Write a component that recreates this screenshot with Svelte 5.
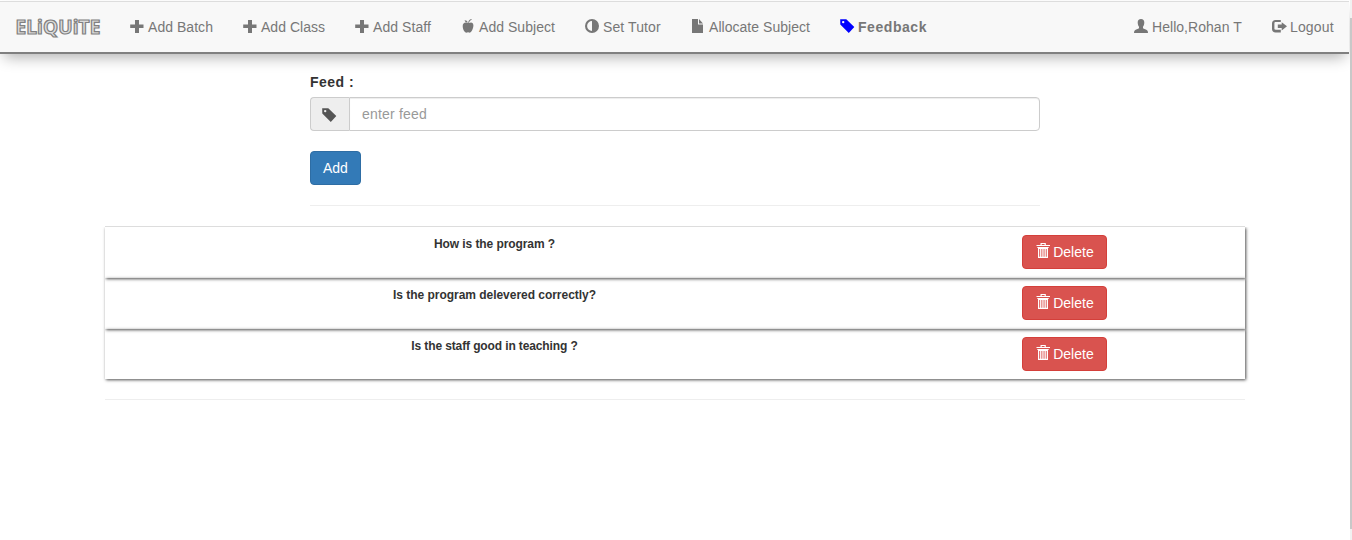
<script>
  const nav = [
    { icon: 'plus', label: 'Add Batch', width: 65, tracking: 0.04 },
    { icon: 'plus', label: 'Add Class', width: 64, tracking: 0.02 },
    { icon: 'plus', label: 'Add Staff', width: 58, tracking: 0.08 },
    { icon: 'apple', label: 'Add Subject', width: 76, tracking: 0.04 },
    { icon: 'adjust', label: 'Set Tutor', width: 58, tracking: 0.1 },
    { icon: 'file', label: 'Allocate Subject', width: 101, tracking: 0.04 },
    { icon: 'tag', label: 'Feedback', width: 69, tracking: 0.55, active: true }
  ];
  const account = [
    { icon: 'user', label: 'Hello,Rohan T', width: 90, tracking: 0.04 },
    { icon: 'logout', label: 'Logout', width: 44, tracking: 0.14 }
  ];
  const feeds = [
    { text: 'How is the program ?', tracking: -0.08 },
    { text: 'Is the program delevered correctly?', tracking: -0.03 },
    { text: 'Is the staff good in teaching ?', tracking: -0.12 }
  ];
</script>

{#snippet glyph(name)}
  <svg class="glyph {name}" viewBox="0 0 14 14" fill="currentColor" aria-hidden="true">
    {#if name === 'plus'}
      <path d="M5 1h4v4.500h4.500v3.500H9V14H5V9H.2V5.500H5z" />
    {:else if name === 'apple'}
      <path d="M7.300 4C7.200 2.500 7.900 1 10.200.1l.6.7C9.200 1.500 8.200 2.500 8 4c2.200-1.300 4.400-.5 4.400 2.300 0 3.300-2 7.400-3.900 7.400-.7 0-.8-.4-1.400-.4s-.7.400-1.400.4C3.700 13.700 1.700 10.500 1.700 7c0-3.200 2.400-4.300 5.600-3zM6.700 3.500C5 3.500 3.900 2.800 3.600 1.300 5.200 1.200 6.400 1.900 6.700 3.500z" />
    {:else if name === 'adjust'}
      <path fill-rule="evenodd" d="M7 0a7 7 0 1 0 0 14A7 7 0 0 0 7 0zm0 2.100v9.800a4.900 4.900 0 0 1 0-9.800z" />
    {:else if name === 'file'}
      <path d="M1 0H7v5.500h5V14H1zM8 0l4 4.400H8z" />
    {:else if name === 'tag'}
      <path fill-rule="evenodd" d="M.2.200 6.300.2 14.300 8 8.800 13.900.3 5.600zM3.200 1.900a1.200 1.200 0 1 0 0 2.400 1.200 1.200 0 0 0 0-2.400z" />
    {:else if name === 'user'}
      <path d="M7 0c2.200 0 3.300 1.400 3.300 3.500 0 1.900-.6 3.300-1.300 4.300v1.500c1 .8 3.200 1.200 4.300 2.200.5.500.7 1.300.7 2.500H0c0-1.200.2-2 .7-2.500 1.100-1 3.300-1.400 4.300-2.200V7.800c-.7-1-1.300-2.400-1.300-4.300C3.700 1.400 4.800 0 7 0z" />
    {:else if name === 'logout'}
      <path d="M8.800 1v2.100H3.600c-.8 0-1.200.5-1.200 1.200v5.300c0 .8.4 1.200 1.200 1.200h5.200V13.500H3.500C1.400 13.500 0 12 0 9.900v-5.400C0 2.400 1.400 1 3.500 1zM9.700 3.200l5.300 4.100-5.300 4.100V9H5.800V5.600h3.900z" />
    {:else if name === 'trash'}
      <path fill-rule="evenodd" d="M4.500-1h5.300v2H14v1H.5V1h4zm1.200 1v1h2.900V0zM1.300 3h11.400v1H12v10H2V4h-.7zM3.200 5v7.700h.9V5zm2.200 0v7.700h.9V5zm2.200 0v7.700h.9V5zm2.200 0v7.700h.9V5z" />
    {/if}
  </svg>
{/snippet}

{#snippet link(item)}
  <a href="#top" class:active={item.active}>
    {@render glyph(item.icon)}
    <span style="width: {item.width}px; letter-spacing: {item.tracking}px">{item.label}</span>
  </a>
{/snippet}

<div class="page">
  <div class="content">
    <header>
      <a class="brand" href="#home">ELiQUiTE</a>
      <nav>
        {#each nav as item}{@render link(item)}{/each}
      </nav>
      <nav class="account">
        {#each account as item}{@render link(item)}{/each}
      </nav>
    </header>
    <main>
      <form onsubmit={(e) => e.preventDefault()}>
        <label for="feed">Feed :</label>
        <div class="input-group">
          <span class="addon">{@render glyph('tag')}</span>
          <input id="feed" type="text" placeholder="enter feed" />
        </div>
        <button class="primary">Add</button>
      </form>
      <section>
        {#each feeds as feed}
          <div class="row">
            <strong style="letter-spacing: {feed.tracking}px">{feed.text}</strong>
            <div class="action"><button class="danger">{@render glyph('trash')} Delete</button></div>
          </div>
        {/each}
      </section>
      <hr />
    </main>
  </div>
  <div class="scroll"><div class="thumb"></div></div>
</div>

<style>
  :global(body) { background: #fff; overflow: hidden; }
  .page, .page * { box-sizing: border-box; }
  .page { display: flex; width: 1352px; height: 540px; overflow: hidden; font: 14px/20px "Liberation Sans", Arial, sans-serif; color: #333; }
  .content { width: 1350px; }
  .scroll { width: 2px; padding-top: 18px; background: #f1f1f1; }
  .thumb { height: 511px; background: #c8c8c8; }
  header { display: flex; width: 1349px; height: 53px; margin-top: 1px; background: #f8f8f8; border-top: 1px solid #ddd; border-bottom: 2px solid #808080; box-shadow: 0 7px 14px -4px rgba(0, 0, 0, .32); }
  .brand { width: 115px; padding: 15px 0 0 15.5px; font: 700 19px/20px "Open Sans", sans-serif; letter-spacing: .1px; color: #ddd; -webkit-text-stroke: 1.2px #808080; text-decoration: none; }
  nav { display: flex; }
  nav a { display: flex; gap: 4px; padding: 15px; color: #777; line-height: 20px; text-decoration: none; white-space: nowrap; }
  .glyph { position: relative; top: 1px; display: inline-block; width: 14px; height: 14px; overflow: visible; }
  nav .glyph { flex: none; top: 2px; }
  nav .active { font-weight: 700; }
  nav .active .glyph { color: #00f; }
  .account { margin-left: auto; }
  form { width: 730px; height: 134px; margin: 18px 0 0 310px; border-bottom: 1px solid #eee; }
  label { display: block; margin-bottom: 5px; font-weight: 700; letter-spacing: .5px; }
  .input-group { display: flex; height: 34px; margin-bottom: 20px; }
  .addon { width: 39px; padding: 8px 11px; background: #eee; border: 1px solid #ccc; border-right: 0; border-radius: 4px 0 0 4px; color: #555; line-height: 18px; }
  .addon .glyph { top: 2px; }
  input { flex: 1; padding: 6px 12px; border: 1px solid #ccc; border-radius: 0 4px 4px 0; box-shadow: inset 0 1px 1px rgba(0, 0, 0, .075); font: inherit; letter-spacing: .2px; outline: 0; }
  input::placeholder { color: #999; opacity: 1; }
  button { height: 34px; padding: 6px 12px; border: 1px solid; border-radius: 4px; color: #fff; font: inherit; }
  .primary { background: #337ab7; border-color: #2e6da4; }
  .danger { background: #d9534f; border-color: #d43f3a; }
  .danger .glyph { top: 1px; left: .5px; }
  section { width: 1140px; margin: 20px 0 0 105px; border-top: 1px solid #ddd; }
  .row { display: flex; height: 51px; padding-top: 8px; box-shadow: 1px 1px 3px rgba(0, 0, 0, .7); }
  .row:first-child { clip-path: inset(0 -5px -5px -5px); }
  .row:last-child { height: 50px; }
  strong { width: 779px; font-size: 12px; line-height: 18px; text-align: center; }
  .action { flex: 1; text-align: center; }
  hr { width: 1140px; margin: 20px 0 0 105px; border: 0; border-top: 1px solid #eee; }
</style>
